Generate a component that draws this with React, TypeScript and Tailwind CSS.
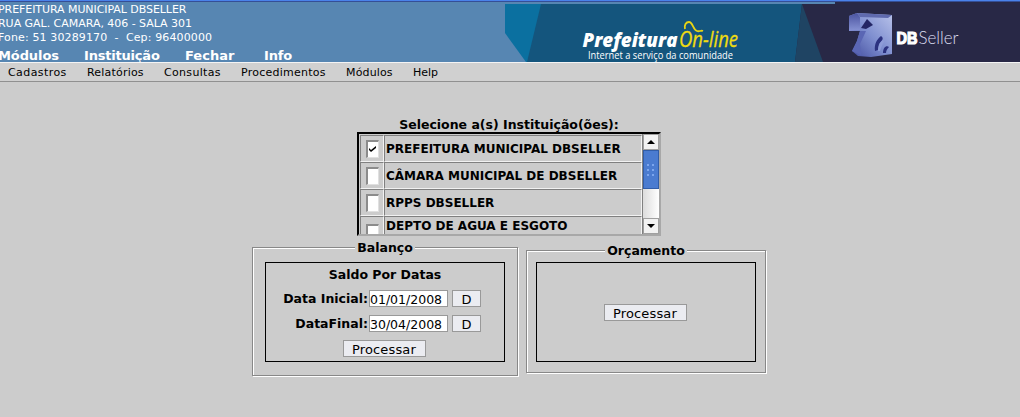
import React from "react";

const sans = "font-['DejaVu_Sans',sans-serif]";

function Item({ className, children }: { className: string; children: React.ReactNode }) {
  return <span className={`block whitespace-pre ${className}`}>{children}</span>;
}

function HeaderArt() {
  return (
    <svg className="block h-[60px] w-[515px] shrink-0" viewBox="505 2 515 60">
      <defs>
        <linearGradient id="cube" x1="0" y1="1" x2="1" y2="0">
          <stop offset="0" stopColor="#414b9c" />
          <stop offset=".5" stopColor="#7f8fd0" />
          <stop offset="1" stopColor="#b9c3ea" />
        </linearGradient>
        <linearGradient id="side" x1="0" y1="0" x2="0" y2="1">
          <stop offset="0" stopColor="#4a539f" />
          <stop offset="1" stopColor="#8793d4" />
        </linearGradient>
      </defs>
      <rect x="505" y="2" width="515" height="60" fill="#5786b2" />
      <path d="M505 4H542V62H526L505 33Z" fill="#0b70a0" />
      <path d="M541 4H803V62H527Z" fill="#14557d" />
      <path d="M802 4L835 4V2H1020V62H795Z" fill="#282846" />
      <path d="M802 4L823 62H795Z" fill="#1f4463" />
      <text x="582.5" y="47" textLength="95" lengthAdjust="spacingAndGlyphs" fill="#fff" fontFamily="Open Sans, sans-serif" fontSize="20" fontWeight="800" fontStyle="italic">Prefeitura</text>
      <text x="679" y="47" textLength="59" lengthAdjust="spacingAndGlyphs" fill="#f0dc10" stroke="#f0dc10" strokeWidth=".3" fontFamily="Open Sans, sans-serif" fontSize="21" fontStyle="italic">On-line</text>
      <path d="M685 29C684 25 686 22 689 22C693 22 693 30 697 31C699 32 701 30 703 31" fill="none" stroke="#e8d414" strokeWidth="1.8" />
      <text x="588" y="59" textLength="145" lengthAdjust="spacingAndGlyphs" fill="#fff" fontFamily="Open Sans, sans-serif" fontSize="10">Internet a serviço da comunidade</text>
      <path d="M849 16L857 13L892 15V54L871 57L858 56L852 51L857 41L860 31L849 31Z" fill="url(#cube)" />
      <path d="M849 16L857 13L860 17V30L849 31Z" fill="url(#side)" />
      <path d="M857 13L892 15L888 18L860 17Z" fill="#5f6aae" />
      <path d="M867 19L873 25L866 29L861 28Z" fill="#242665" />
      <path d="M860 31L866 31L860 44L861 55L852 51L857 41Z" fill="#5a66b4" />
      <path d="M875 51C874 44 877 39 881 36C885 39 881 41 879 44L878 50ZM883 53C883 48 886 45 889 47C887 49 886 51 886 53Z" fill="#2c3280" />
      <path d="M878 51C878 46 880 42 883 40L884 42C882 45 881 48 880 51Z" fill="#8e9cd8" />
      <text x="896.5" y="43.5" textLength="21" lengthAdjust="spacingAndGlyphs" fill="#fff" stroke="#fff" strokeWidth="1.2" fontFamily="Liberation Sans, sans-serif" fontSize="17" fontWeight="700">DB</text>
      <text x="918.5" y="43.5" textLength="40" lengthAdjust="spacingAndGlyphs" fill="#dcdcf0" fontFamily="Lato, sans-serif" fontSize="18" fontWeight="300">Seller</text>
    </svg>
  );
}

function Header() {
  return (
    <header className="flex h-[62px] flex-col bg-[#5786b2]">
      <div className="h-px shrink-0 bg-[#4a82ea]" />
      <div className="h-px shrink-0 bg-[#354f96]" />
      <div className="flex h-[60px]">
        <div className="w-[505px] overflow-hidden text-white">
          <div className="-ml-[2px] whitespace-pre pt-px text-[11px] leading-[14px]">
            <div className="tracking-[-0.07px]">PREFEITURA MUNICIPAL DBSELLER</div>
            <div className="tracking-[-0.03px]">RUA GAL. CAMARA, 406 - SALA 301</div>
            <div className="tracking-[0.13px]">Fone: 51 30289170  -  Cep: 96400000</div>
          </div>
          <nav className="-ml-[2px] mt-[3px] flex text-[13px] font-bold leading-[16px]">
            <Item className="w-[86px] tracking-[-0.1px]">Módulos</Item>
            <Item className="w-[101px] tracking-[-0.2px]">Instituição</Item>
            <Item className="w-[79px]">Fechar</Item>
            <Item className="w-[40px] tracking-[-0.2px]">Info</Item>
          </nav>
        </div>
        <HeaderArt />
      </div>
    </header>
  );
}

function MenuBar() {
  return (
    <nav className="flex h-[20px] border-b border-t border-b-[#909090] border-t-[#f4f4f4] bg-[#d0d0d0] pl-[8px] text-[11px] leading-[20px]">
      <Item className="w-[79px] tracking-[0.42px]">Cadastros</Item>
      <Item className="w-[77px] tracking-[0.2px]">Relatórios</Item>
      <Item className="w-[77px] tracking-[0.33px]">Consultas</Item>
      <Item className="w-[105px] tracking-[0.25px]">Procedimentos</Item>
      <Item className="w-[67px] tracking-[0.15px]">Módulos</Item>
      <Item className="w-[40px]">Help</Item>
    </nav>
  );
}

const cell = "border border-b-[#f2f2f2] border-l-[#808080] border-r-[#f2f2f2] border-t-[#808080]";

function Row({ label, checked, last }: { label: string; checked?: boolean; last?: boolean }) {
  return (
    <div className="flex h-[27px] shrink-0">
      <div className={`flex w-[24px] pl-[5px] ${last ? "pt-[7px]" : "pt-[4px]"} ${cell}`}>
        <div className="h-[18px] w-[13px] border-b border-l-2 border-r border-t-2 border-b-[#e0e0e0] border-l-[#8c8c8c] border-r-[#e0e0e0] border-t-[#8c8c8c] bg-white">
          {checked && (
            <svg className="block h-[14px] w-[9px]" viewBox="0 0 9 14">
              <path d="M1 6V8L3 10L8 6V4L3 8Z" fill="#000" />
            </svg>
          )}
        </div>
      </div>
      <div className={`w-[258px] whitespace-nowrap pl-[1px] text-[12px] font-bold ${last ? "leading-[19px]" : "leading-[27px]"} ${cell}`}>{label}</div>
    </div>
  );
}

function Arrow({ down }: { down?: boolean }) {
  return (
    <svg className="block h-[16px] w-[16px] shrink-0 border border-[#a0a0a0] bg-[#f2f2f2]" viewBox="0 0 14 14">
      <path d={down ? "M3 5H11L7 9Z" : "M3 9H11L7 5Z"} fill="#000" />
    </svg>
  );
}

function InstitutionList() {
  return (
    <div className="flex h-[104px] w-[304px] border-2 border-b-[#a8a8a8] border-l-black border-r-[#a8a8a8] border-t-black">
      <div className="flex w-[283px] flex-col overflow-hidden pl-[1px] pt-[1px]">
        <Row label="PREFEITURA MUNICIPAL DBSELLER" checked />
        <Row label="CÂMARA MUNICIPAL DE DBSELLER" />
        <Row label="RPPS DBSELLER" />
        <Row label="DEPTO DE AGUA E ESGOTO" last />
      </div>
      <div className="flex h-[100px] w-[17px] flex-col border-l border-l-[#808080] bg-gradient-to-r from-[#dcdcdc] to-white">
        <Arrow />
        <div className="flex h-[39px] items-center justify-center border border-[#315da8] bg-[#4a7bd0]">
          <svg className="h-[14px] w-[8px]" viewBox="0 0 8 14">
            <path d="M0 1h2v2H0zM5 1h2v2H5zM0 6h2v2H0zM5 6h2v2H5zM0 11h2v2H0zM5 11h2v2H5z" fill="#7ca6ee" />
          </svg>
        </div>
        <div className="flex-1" />
        <Arrow down />
      </div>
    </div>
  );
}

function Button({ w, children }: { w: string; children: React.ReactNode }) {
  return <button className={`block h-[17px] border border-[#999] bg-[#ebecf1] text-center text-[13px] leading-[17px] tracking-[0.15px] ${w}`}>{children}</button>;
}

function DateRow({ label, value }: { label: string; value: string }) {
  return (
    <div className="flex h-[17px]">
      <label className="w-[102px] whitespace-nowrap text-right text-[12.5px] font-bold leading-[18px]">{label}</label>
      <input className="ml-px block h-[17px] w-[79px] border border-[#999] bg-white pt-px text-[12.5px] leading-[15px]" defaultValue={value} />
      <div className="ml-[4px]"><Button w="w-[29px]">D</Button></div>
    </div>
  );
}

function Group({ title, box, legend, children }: { title: string; box: string; legend: string; children: React.ReactNode }) {
  return (
    <fieldset className={`border border-[#888] shadow-[1px_1px_0_#fff,inset_1px_1px_0_#fff] ${box}`}>
      <legend className={`mx-auto h-[16px] whitespace-nowrap bg-[#ccc] text-center text-[12.5px] font-bold leading-[18px] ${legend}`}>{title}</legend>
      {children}
    </fieldset>
  );
}

export default function App() {
  return (
    <div className={`h-[417px] w-[1020px] overflow-hidden bg-[#ccc] text-black ${sans}`}>
      <Header />
      <MenuBar />
      <main className="flex w-[1018px] flex-col items-center pt-[35px]">
        <h1 className="h-[15px] text-[12.5px] font-bold leading-[16px]">Selecione a(s) Instituição(ões):</h1>
        <InstitutionList />
        <div className="flex w-[514px] items-start gap-[8px] pt-[3px]">
          <Group title="Balanço" box="h-[137px] w-[266px]" legend="w-[60px]">
            <div className="ml-[12px] mt-[7px] h-[100px] w-[240px] border border-black">
              <h2 className="h-[27px] text-center text-[12.5px] font-bold leading-[24px]">Saldo Por Datas</h2>
              <DateRow label="Data Inicial:" value="01/01/2008" />
              <div className="h-[8px]" />
              <DateRow label="DataFinal:" value="30/04/2008" />
              <div className="flex justify-center pr-[2px] pt-[8px]"><Button w="w-[83px]">Processar</Button></div>
            </div>
          </Group>
          <div className="pt-[3px]">
            <Group title="Orçamento" box="h-[131px] w-[240px]" legend="w-[82px]">
              <div className="ml-[9px] mt-[4px] flex h-[100px] w-[220px] items-center justify-center border border-black pr-[2px]">
                <Button w="w-[83px]">Processar</Button>
              </div>
            </Group>
          </div>
        </div>
      </main>
    </div>
  );
}
